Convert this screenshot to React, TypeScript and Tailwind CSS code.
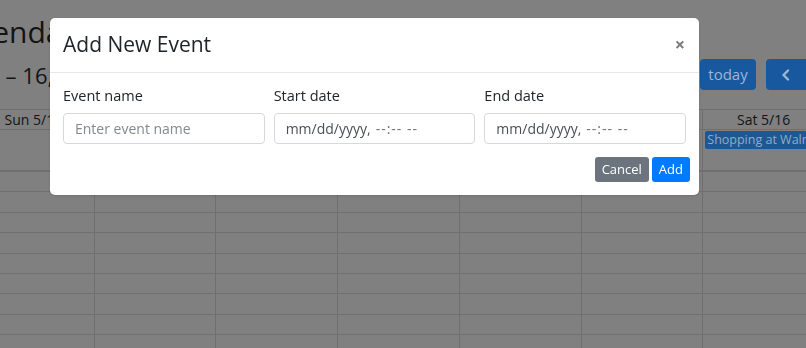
import React from "react";

const days = ["Sun 5/10", "Mon 5/11", "Tue 5/12", "Wed 5/13", "Thu 5/14", "Fri 5/15", "Sat 5/16"];
const slotRows = Array.from({ length: 9 }, (_, i) => i);

function CalendarBehind() {
  return (
    <div className="-ml-[27px] w-[873px] text-[#141414]">
      <h1 className="-ml-[24px] pt-[14px] text-[30px] leading-[36px] font-normal">Calendar</h1>

      <div className="mt-[9px] flex h-[31px] items-center">
        <h2 className="-ml-[47px] text-[22px] leading-[30px] font-normal">May 10 – 16, 2020</h2>
        <div className="ml-auto flex items-center gap-[10px]">
          <button className="h-[31px] w-[56px] rounded-[4px] bg-[#17589f] text-[15px] text-[#9db6d3]">
            today
          </button>
          <div className="flex">
            <button className="flex h-[31px] w-[40px] items-center justify-center rounded-l-[4px] bg-[#17589f] text-[#9db6d3]">
              <svg width="10" height="12" viewBox="0 0 10 12" fill="none">
                <path d="M7 1.5 2.5 6 7 10.5" stroke="currentColor" strokeWidth="2.4" strokeLinecap="round" strokeLinejoin="round" />
              </svg>
            </button>
            <button className="flex h-[31px] w-[40px] items-center justify-center rounded-r-[4px] border-l border-[#114a88] bg-[#17589f] text-[#9db6d3]">
              <svg width="10" height="12" viewBox="0 0 10 12" fill="none">
                <path d="M3 1.5 7.5 6 3 10.5" stroke="currentColor" strokeWidth="2.4" strokeLinecap="round" strokeLinejoin="round" />
              </svg>
            </button>
          </div>
        </div>
      </div>

      <div className="mt-[19px] w-[852px]">
        {/* day headers */}
        <div className="grid h-[21px] grid-cols-7 border-y border-[#6f6f6f]">
          {days.map((d) => (
            <div key={d} className="flex items-center justify-center border-r border-[#6f6f6f] text-[14px] leading-none">
              {d}
            </div>
          ))}
        </div>
        {/* all-day row */}
        <div className="grid h-[42px] grid-cols-7 border-b-2 border-[#6f6f6f]">
          {days.map((d, i) => (
            <div key={d} className="border-r border-[#6f6f6f] pt-[1px] pl-[2px]">
              {i === 6 && (
                <div className="h-[18px] overflow-hidden whitespace-nowrap rounded-[2px] bg-[#1b5894] pl-[2px] text-[12.5px] leading-[18px] text-[#93aac4]">
                  Shopping at Walmart
                </div>
              )}
            </div>
          ))}
        </div>
        {slotRows.map((r) => (
          <div key={r} className="grid h-[20.4px] grid-cols-7 border-b border-[#707070]">
            {days.map((d) => (
              <div key={d} className="border-r border-[#6f6f6f]" />
            ))}
          </div>
        ))}
      </div>
    </div>
  );
}

function DateField({ label }: { label: string }) {
  return (
    <div>
      <label className="block text-[14.5px] leading-[20px]">{label}</label>
      <div className="mt-[7px] flex h-[31px] w-full items-center whitespace-nowrap rounded-[4px] border border-[#d5d9dd] px-[11px] text-[14px] text-[#4a4f55]">
        mm/dd/yyyy,
        <span className="ml-[5px] tracking-[1px] text-[#6d7278]">--:-- --</span>
      </div>
    </div>
  );
}

function AddEventModal() {
  return (
    <div className="fixed left-[50px] top-[18px] w-[649px] rounded-[5px] bg-white text-[#212529] shadow-sm">
      <div className="flex h-[55px] items-center justify-between border-b border-[#e6e8ea] pl-[13px] pr-[14px] pb-[2px]">
        <h5 className="text-[21px] leading-[28px] font-normal">Add New Event</h5>
        <button className="text-[18px] leading-none font-bold text-[#7a7a7a]">×</button>
      </div>

      <div className="px-[13px] pt-[13px]">
        <div className="grid grid-cols-3 gap-[9px]">
          <div>
            <label className="block text-[14.5px] leading-[20px]">Event name</label>
            <input
              className="mt-[7px] h-[31px] w-full rounded-[4px] border border-[#d5d9dd] px-[11px] text-[14px] outline-none placeholder:text-[#84898f]"
              placeholder="Enter event name"
            />
          </div>
          <DateField label="Start date" />
          <DateField label="End date" />
        </div>
      </div>

      <div className="flex justify-end gap-[3px] px-[9px] pt-[13px] pb-[13px]">
        <button className="h-[25px] rounded-[3px] bg-[#6c757d] px-[7px] text-[13px] text-white">Cancel</button>
        <button className="h-[25px] rounded-[3px] bg-[#007bff] px-[7px] text-[13px] text-white">Add</button>
      </div>
    </div>
  );
}

export default function App() {
  return (
    <div className="relative h-[348px] w-[806px] overflow-hidden bg-[#808080] font-['Open_Sans','Noto_Sans',sans-serif]">
      <CalendarBehind />
      <AddEventModal />
    </div>
  );
}
